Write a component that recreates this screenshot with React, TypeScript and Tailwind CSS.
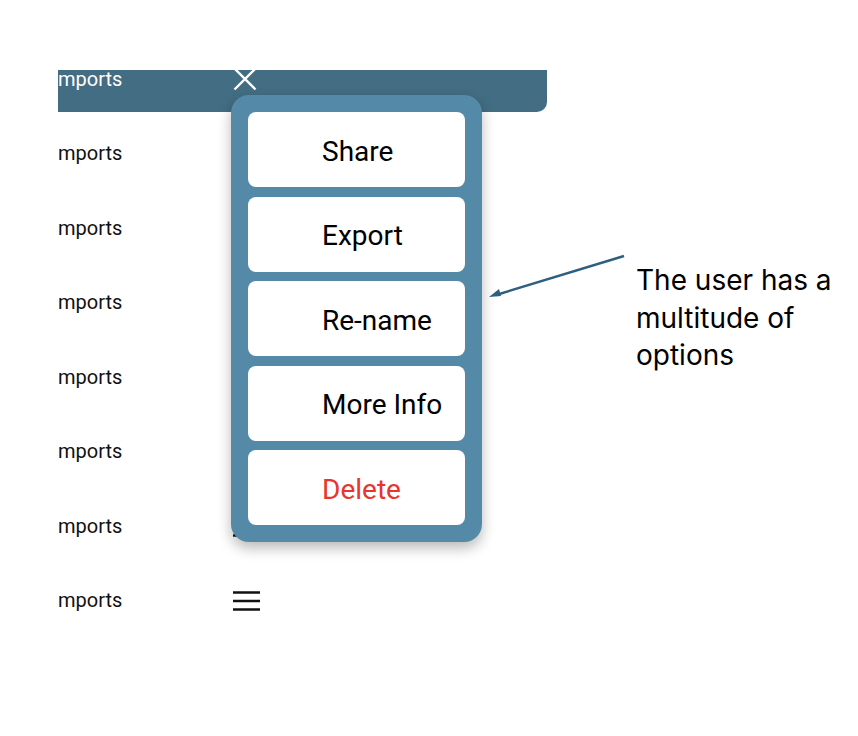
import React from 'react'

const options = [
    { label: 'Share', danger: false },
    { label: 'Export', danger: false },
    { label: 'Re-name', danger: false },
    { label: 'More Info', danger: false },
    { label: 'Delete', danger: true },
]

const Hamburger = () => (
    <svg width="27" height="22" viewBox="0 0 27 22" className="shrink-0 mt-[2px]">
        <path d="M0 2.5h27M0 11h27M0 19.5h27" stroke="#111" strokeWidth="2.6" />
    </svg>
)

const App = () => {
    const rows = [1, 2, 3, 4, 5, 6, 7]

    return (
        <div className="relative w-[858px] h-[736px] bg-white overflow-hidden" style={{ fontFamily: 'Roboto, "Liberation Sans", sans-serif' }}>
            {/* file list, cropped from the app screen */}
            <div className="pt-[70px] pl-[58px]">
                <div className="w-[489px]">
                    <div className="h-[42px] bg-[#436d83] rounded-br-[10px] flex items-start">
                        <span className="w-[175px] text-[20px] leading-[20px] -mt-[1px] text-white">mports</span>
                        <svg width="24" height="21" viewBox="0 0 24 21" className="shrink-0">
                            <path d="M1.5 -1.5l21 21M22.5 -1.5l-21 21" stroke="#fff" strokeWidth="2.4" />
                        </svg>
                    </div>
                    <div className="mt-[4px]">
                        {rows.map((r) => (
                            <div key={r} className="h-[74.5px] flex items-center">
                                <span className="w-[175px] text-[20px] text-[#111]">mports</span>
                                <Hamburger />
                            </div>
                        ))}
                    </div>
                </div>
            </div>

            {/* options menu */}
            <div className="absolute left-[231px] top-[95px] w-[251px] bg-[#548aa7] rounded-[18px] p-[17px] flex flex-col gap-[9.5px] shadow-[0_6px_14px_rgba(0,0,0,0.28)]">
                {options.map((o) => (
                    <div key={o.label} className="h-[75px] bg-white rounded-[8px] flex items-center pl-[74px] pt-[4px]">
                        <span className={`text-[28px] ${o.danger ? 'text-[#e9352b]' : 'text-black'}`}>{o.label}</span>
                    </div>
                ))}
            </div>

            {/* annotation */}
            <svg className="absolute left-0 top-0" width="858" height="736">
                <path d="M624 256L496 295" stroke="#2e5f80" strokeWidth="2.4" />
                <path d="M489 297l10-8 2 7z" fill="#2e5f80" />
            </svg>
            <p className="absolute left-[636px] top-[262px] text-[28px] leading-[37.5px] text-black" style={{ fontFamily: 'Inter, "Liberation Sans", sans-serif' }}>
                The user has a<br />multitude of<br />options
            </p>
        </div>
    )
}

export default App
